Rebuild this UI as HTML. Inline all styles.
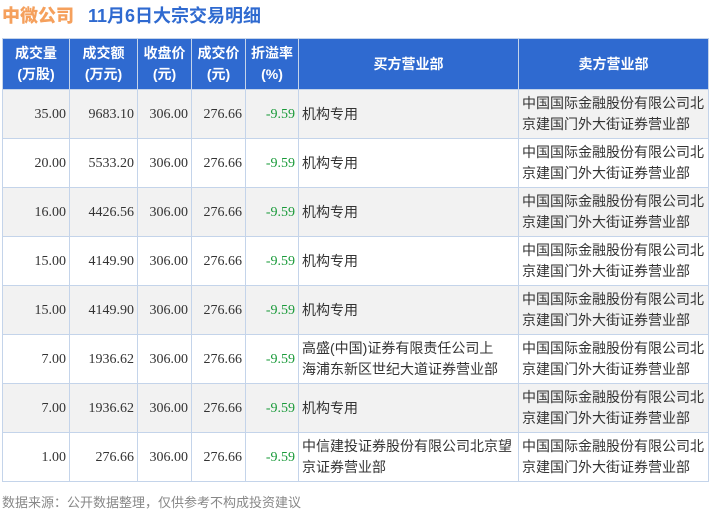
<!DOCTYPE html>
<html><head><meta charset="utf-8"><style>
body{margin:0;width:710px;height:512px;background:#fff;font-family:"Liberation Sans","Noto Sans CJK SC",sans-serif;overflow:hidden;position:relative}
.t{position:absolute;left:2px;top:2px;font-size:18px;font-weight:bold;color:#2f6ad0;white-space:nowrap}
.t b{color:#f5a05c;margin-right:14px}
table{position:absolute;left:2px;top:38px;border-collapse:collapse;table-layout:fixed;width:707px}
td,th{border:1px solid #c4d4ea;font-size:14px;color:#333;padding:0 3px;line-height:21px}
th{background:#2f6ad0;color:#fff;font-weight:bold;height:50px;text-align:center;border-color:#c4d4ea}
td{height:48px}
td.b{white-space:nowrap}
tr:nth-child(even) td{background:#f2f2f2}
.n{text-align:right;font-family:"Liberation Serif",serif}
.g{color:#1a9a3a;text-align:right;font-family:"Liberation Serif",serif}
.f{position:absolute;left:2px;top:492px;font-size:13px;color:#888}
</style></head><body>
<div class="t"><b>中微公司</b>11月6日大宗交易明细</div>
<table>
<colgroup><col style="width:67px"><col style="width:68px"><col style="width:54px"><col style="width:54px"><col style="width:53px"><col style="width:220px"><col></colgroup>
<tr><th>成交量<br>(万股)</th><th>成交额<br>(万元)</th><th>收盘价<br>(元)</th><th>成交价<br>(元)</th><th>折溢率<br>(%)</th><th>买方营业部</th><th>卖方营业部</th></tr>
<tr><td class="n">35.00</td><td class="n">9683.10</td><td class="n">306.00</td><td class="n">276.66</td><td class="g">-9.59</td><td class="b">机构专用</td><td>中国国际金融股份有限公司北京建国门外大街证券营业部</td></tr>
<tr><td class="n">20.00</td><td class="n">5533.20</td><td class="n">306.00</td><td class="n">276.66</td><td class="g">-9.59</td><td class="b">机构专用</td><td>中国国际金融股份有限公司北京建国门外大街证券营业部</td></tr>
<tr><td class="n">16.00</td><td class="n">4426.56</td><td class="n">306.00</td><td class="n">276.66</td><td class="g">-9.59</td><td class="b">机构专用</td><td>中国国际金融股份有限公司北京建国门外大街证券营业部</td></tr>
<tr><td class="n">15.00</td><td class="n">4149.90</td><td class="n">306.00</td><td class="n">276.66</td><td class="g">-9.59</td><td class="b">机构专用</td><td>中国国际金融股份有限公司北京建国门外大街证券营业部</td></tr>
<tr><td class="n">15.00</td><td class="n">4149.90</td><td class="n">306.00</td><td class="n">276.66</td><td class="g">-9.59</td><td class="b">机构专用</td><td>中国国际金融股份有限公司北京建国门外大街证券营业部</td></tr>
<tr><td class="n">7.00</td><td class="n">1936.62</td><td class="n">306.00</td><td class="n">276.66</td><td class="g">-9.59</td><td class="b">高盛(中国)证券有限责任公司上<br>海浦东新区世纪大道证券营业部</td><td>中国国际金融股份有限公司北京建国门外大街证券营业部</td></tr>
<tr><td class="n">7.00</td><td class="n">1936.62</td><td class="n">306.00</td><td class="n">276.66</td><td class="g">-9.59</td><td class="b">机构专用</td><td>中国国际金融股份有限公司北京建国门外大街证券营业部</td></tr>
<tr><td class="n">1.00</td><td class="n">276.66</td><td class="n">306.00</td><td class="n">276.66</td><td class="g">-9.59</td><td class="b">中信建投证券股份有限公司北京望<br>京证券营业部</td><td>中国国际金融股份有限公司北京建国门外大街证券营业部</td></tr>
</table>
<div class="f">数据来源：公开数据整理，仅供参考不构成投资建议</div>
</body></html>
